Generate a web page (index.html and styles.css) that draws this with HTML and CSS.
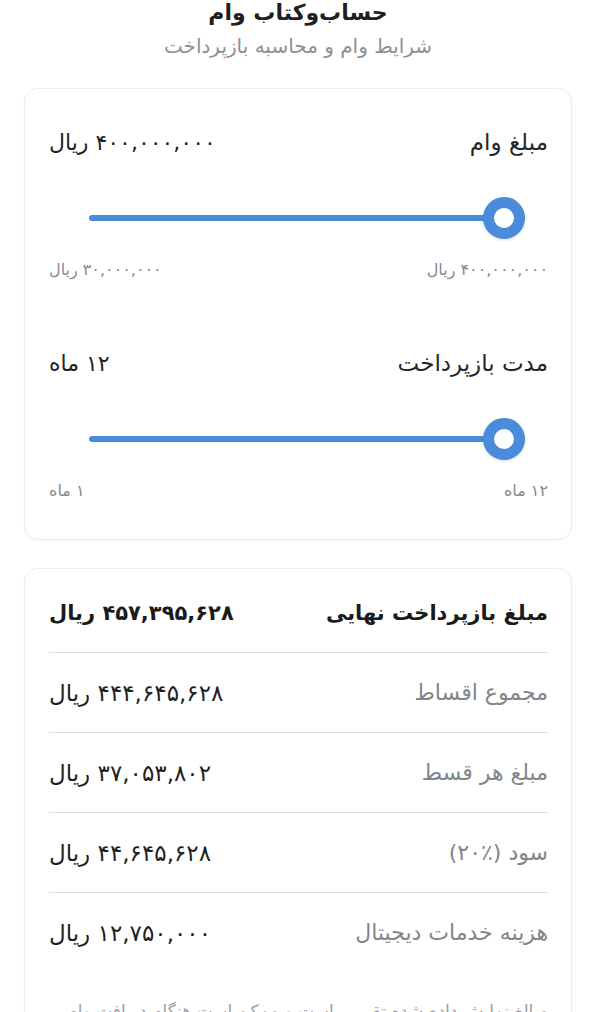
FILE: index.html
```html
<!DOCTYPE html>
<html lang="fa" dir="rtl">
<head>
    <meta charset="UTF-8">
    <meta name="viewport" content="width=device-width, initial-scale=1.0">
    <title>حساب‌وکتاب وام</title>
    <link rel="stylesheet" href="styles.css">
</head>
<body>
    <!-- Header -->
    <header class="page-head">
        <h1 class="page-title">حساب‌وکتاب وام</h1>
        <p class="page-subtitle">شرایط وام و محاسبه بازپرداخت</p>
    </header>

    <!-- Loan sliders -->
    <section class="card sliders-card">
        <div class="slider-group">
            <div class="slider-head">
                <span class="slider-label">مبلغ وام</span>
                <span class="slider-value">۴۰۰,۰۰۰,۰۰۰ ریال</span>
            </div>
            <input class="range" type="range" dir="ltr" min="30000000" max="400000000" step="10000000" value="400000000">
            <div class="slider-limits">
                <span>۴۰۰,۰۰۰,۰۰۰ ریال</span>
                <span>۳۰,۰۰۰,۰۰۰ ریال</span>
            </div>
        </div>

        <div class="slider-group">
            <div class="slider-head">
                <span class="slider-label">مدت بازپرداخت</span>
                <span class="slider-value">۱۲ ماه</span>
            </div>
            <input class="range" type="range" dir="ltr" min="1" max="12" step="1" value="12">
            <div class="slider-limits">
                <span>۱۲ ماه</span>
                <span>۱ ماه</span>
            </div>
        </div>
    </section>

    <!-- Result -->
    <section class="card result-card">
        <div class="result-row total">
            <span class="result-label">مبلغ بازپرداخت نهایی</span>
            <span class="result-value">۴۵۷,۳۹۵,۶۲۸ ریال</span>
        </div>
        <div class="result-row">
            <span class="result-label">مجموع اقساط</span>
            <span class="result-value">۴۴۴,۶۴۵,۶۲۸ ریال</span>
        </div>
        <div class="result-row">
            <span class="result-label">مبلغ هر قسط</span>
            <span class="result-value">۳۷,۰۵۳,۸۰۲ ریال</span>
        </div>
        <div class="result-row">
            <span class="result-label">سود (٪۲۰)</span>
            <span class="result-value">۴۴,۶۴۵,۶۲۸ ریال</span>
        </div>
        <div class="result-row">
            <span class="result-label">هزینه خدمات دیجیتال</span>
            <span class="result-value">۱۲,۷۵۰,۰۰۰ ریال</span>
        </div>
        <p class="result-note">مبالغ نمایش داده شده تقریبی است و ممکن است هنگام دریافت وام تغییر کند.</p>
    </section>
</body>
</html>
```

FILE: styles.css
```css
body {
    font-family: 'DejaVu Sans', sans-serif;
    margin: 0;
    padding: 0 24px 40px;
    background-color: #fff;
    color: #222;
}

.page-head {
    text-align: center;
}

.page-title {
    font-size: 22px;
    font-weight: bold;
    margin: 0;
    line-height: 26px;
    color: #1f1f1f;
}

.page-subtitle {
    font-size: 20px;
    color: #8b9196;
    margin: 5px 0 0;
    line-height: 30px;
}

/* Cards */
.card {
    border: 1px solid #ececec;
    border-radius: 14px;
    background-color: #fff;
    box-shadow: 0 1px 3px rgba(0, 0, 0, 0.03);
}

.sliders-card {
    margin-top: 27px;
    padding: 36px 23px 39px 24px;
}

.slider-group {
    display: flex;
    flex-direction: column;
}

.slider-group + .slider-group {
    margin-top: 67px;
}

.slider-head {
    display: flex;
    justify-content: space-between;
    align-items: center;
    height: 34px;
}

.slider-label {
    font-size: 23px;
    color: #262626;
}

.slider-value {
    font-size: 22px;
    color: #1f1f1f;
}

.slider-limits {
    display: flex;
    justify-content: space-between;
    align-items: center;
    height: 20px;
    font-size: 16px;
    color: #858a8f;
    margin-top: 19px;
}

/* Range slider */
.range {
    -webkit-appearance: none;
    appearance: none;
    height: 44px;
    margin: 37px 23px 0 40px;
    padding: 0;
    background: transparent;
}

.range::-webkit-slider-runnable-track {
    height: 6px;
    border-radius: 3px;
    background-color: #4a8bdb;
}

.range::-webkit-slider-thumb {
    -webkit-appearance: none;
    appearance: none;
    width: 42px;
    height: 42px;
    margin-top: -18px;
    border-radius: 50%;
    box-sizing: border-box;
    border: 11px solid #4a8bdb;
    background-color: #fff;
    box-shadow: 0 1px 3px rgba(0, 0, 0, 0.15);
}

/* Result rows */
.result-card {
    margin-top: 28px;
    padding: 4px 23px 0 24px;
    height: 480px;
}

.result-row {
    display: flex;
    justify-content: space-between;
    align-items: center;
    height: 79px;
    border-bottom: 1px solid #dcdfe2;
}

.result-row:last-of-type {
    border-bottom: none;
}

.result-label {
    font-size: 22px;
    color: #80868b;
}

.result-value {
    font-size: 23px;
    color: #1f1f1f;
}

.total .result-label,
.total .result-value {
    font-size: 21px;
    color: #1a1a1a;
    font-weight: bold;
}

.result-note {
    margin: 26px 0 0;
    font-size: 17px;
    color: #9aa0a5;
    line-height: 26px;
}
```
